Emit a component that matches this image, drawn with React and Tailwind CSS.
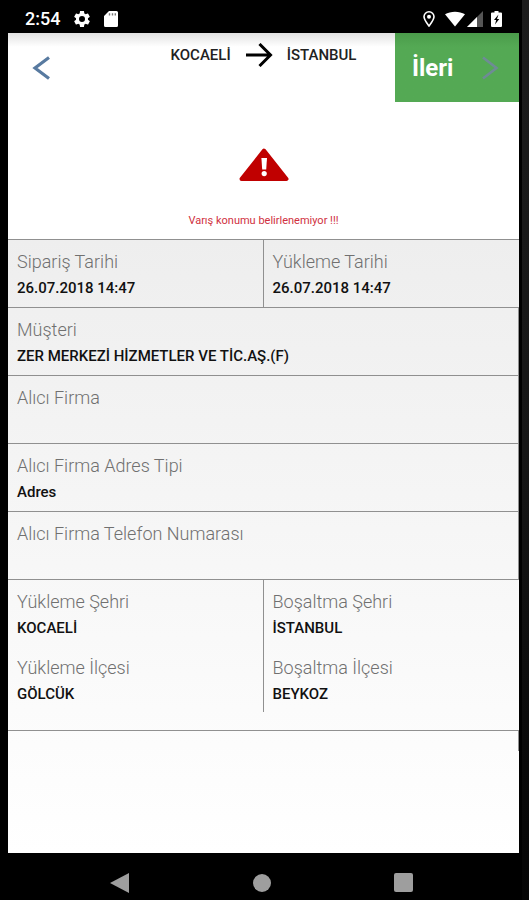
const dates = [
    { label: "Sipariş Tarihi", value: "26.07.2018 14:47" },
    { label: "Yükleme Tarihi", value: "26.07.2018 14:47" },
];

const company = [
    { label: "Müşteri", value: "ZER MERKEZİ HİZMETLER VE TİC.AŞ.(F)" },
    { label: "Alıcı Firma", value: "" },
    { label: "Alıcı Firma Adres Tipi", value: "Adres" },
    { label: "Alıcı Firma Telefon Numarası", value: "" },
];

const loading = [
    { label: "Yükleme Şehri", value: "KOCAELİ" },
    { label: "Yükleme İlçesi", value: "GÖLCÜK" },
];

const unloading = [
    { label: "Boşaltma Şehri", value: "İSTANBUL" },
    { label: "Boşaltma İlçesi", value: "BEYKOZ" },
];

function Field({ label, value }) {
    return (
        <div>
            <dt className="text-lg leading-7 font-light text-[#707070]">{label}</dt>
            <dd className="h-6 text-[15px] leading-6 font-medium text-[#111111]">{value}</dd>
        </div>
    );
}

function StatusBar() {
    return (
        <div className="flex h-[33px] items-center justify-between pt-1 pr-[17px] pl-[17px] text-white">
            <div className="flex items-center gap-3">
                <span className="text-lg leading-6 font-medium">2:54</span>
                <svg className="size-5" viewBox="0 0 24 24" fill="currentColor" aria-hidden="true">
                    <path d="M19.14 12.94c.04-.3.06-.61.06-.94s-.02-.64-.07-.94l2.03-1.58c.18-.14.23-.41.12-.61l-1.92-3.32c-.12-.22-.37-.29-.59-.22l-2.39.96c-.5-.38-1.03-.7-1.62-.94l-.36-2.54c-.04-.24-.24-.41-.48-.41h-3.84c-.24 0-.43.17-.47.41l-.36 2.54c-.59.24-1.13.57-1.62.94l-2.39-.96c-.22-.08-.47 0-.59.22L2.74 8.87c-.12.21-.08.47.12.61l2.03 1.58c-.05.3-.09.63-.09.94s.02.64.07.94l-2.03 1.58c-.18.14-.23.41-.12.61l1.92 3.32c.12.22.37.29.59.22l2.39-.96c.5.38 1.03.7 1.62.94l.36 2.54c.05.24.24.41.48.41h3.84c.24 0 .44-.17.47-.41l.36-2.54c.59-.24 1.13-.56 1.62-.94l2.39.96c.22.08.47 0 .59-.22l1.92-3.32c.12-.22.07-.47-.12-.61l-2.01-1.58zM12 15.6A3.6 3.6 0 1 1 12 8.4a3.6 3.6 0 0 1 0 7.2z" />
                </svg>
                <svg className="h-4 w-[14px]" viewBox="0 0 14 16" fill="currentColor" aria-hidden="true">
                    <path d="M5 0h7.5A1.5 1.5 0 0 1 14 1.500v13a1.5 1.5 0 0 1-1.5 1.5h-11A1.5 1.5 0 0 1 0 14.500V5z" />
                    <path d="M5.500 2.200v2.400M8.500 2.200v2.400M11.300 2.200v2.400" stroke="#777" strokeWidth="1.400" />
                </svg>
            </div>
            <div className="flex items-center">
                <svg className="mr-[10px] h-4 w-3" viewBox="0 0 12 16" fill="none" stroke="currentColor" aria-hidden="true">
                    <path d="M6 15C3.600 11.800 1 8.600 1 5.800a5 5 0 0 1 10 0C11 8.600 8.400 11.800 6 15z" strokeWidth="1.600" />
                    <circle cx="6" cy="5.800" r="2" fill="currentColor" stroke="none" />
                </svg>
                <svg className="mr-[2px] h-4 w-5" viewBox="0 0 20 16" fill="currentColor" aria-hidden="true">
                    <path d="M0 3.200C5.500-.2 14.500-.2 20 3.200L10 15.500z" />
                </svg>
                <svg className="mr-2 size-4" viewBox="0 0 16 16" fill="currentColor" aria-hidden="true">
                    <path d="M16 0v16H0z" fill="#555555" />
                    <path d="M10 6v10H0z" />
                </svg>
                <svg className="h-4 w-[11px]" viewBox="0 0 11 16" fill="currentColor" aria-hidden="true">
                    <path d="M3.500 0h4v1.500H10a1 1 0 0 1 1 1V15a1 1 0 0 1-1 1H1a1 1 0 0 1-1-1V2.500a1 1 0 0 1 1-1h2.500z" />
                    <path d="M7.500 3.500L3 9h2.200L4 13.500 8.300 8H6z" fill="#000" />
                </svg>
            </div>
        </div>
    );
}

function Header() {
    return (
        <header className="flex items-start justify-between bg-linear-to-b from-[#e2e2e2] to-white to-20%">
            <button type="button" aria-label="Geri" className="flex h-[69px] w-[124px] items-center pl-6">
                <svg className="h-6 w-[18px]" viewBox="0 0 18 24" fill="none" stroke="#587aa0" strokeWidth="3.200" aria-hidden="true">
                    <path d="M17 1.500L3 12l14 10.500" />
                </svg>
            </button>
            <div className="flex items-center gap-[14px] pt-2 text-[15px] leading-7 font-medium text-[#222222]">
                <span>KOCAELİ</span>
                <svg className="h-6 w-7" viewBox="0 0 28 24" fill="none" stroke="#000" strokeWidth="3" aria-hidden="true">
                    <path d="M1 12h25M14.500 1L25.500 12l-11 11" />
                </svg>
                <span>İSTANBUL</span>
            </div>
            <button
                type="button"
                className="flex h-[69px] w-[124px] items-center justify-between bg-linear-to-b from-[#4a9b4a] to-[#54a954] to-20% pr-5 pl-[17px] text-2xl font-bold text-white"
            >
                İleri
                <svg className="h-6 w-[18px]" viewBox="0 0 18 24" fill="none" stroke="#6f8b96" strokeWidth="2.600" aria-hidden="true">
                    <path d="M2 1.500L15.500 12 2 22.500" />
                </svg>
            </button>
        </header>
    );
}

function Warning() {
    return (
        <div className="flex flex-col items-center pt-[46px] pb-2">
            <svg className="h-[33px] w-[50px]" viewBox="0 0 50 33" aria-hidden="true">
                <path d="M25 2.500L47.500 31h-45z" fill="#c00000" stroke="#c00000" strokeWidth="4" strokeLinejoin="round" />
                <path d="M22.400 10h5.600l-.8 11.500h-4z" fill="#fff" />
                <circle cx="25.200" cy="25.600" r="2.600" fill="#fff" />
            </svg>
            <p className="mt-[30px] text-[11px] leading-5 text-[#d03040]">Varış konumu belirlenemiyor !!!</p>
        </div>
    );
}

export default function App() {
    return (
        <div className="flex min-h-screen bg-black pl-2 font-['Roboto',sans-serif]">
            <div className="flex flex-1 flex-col">
                <StatusBar />
                <main className="flex flex-1 flex-col bg-white">
                    <Header />
                    <Warning />
                    <dl className="flex-1 bg-linear-to-b from-[#eeeeee] to-white">
                        <div className="grid grid-cols-2 border-t border-[#909090]">
                            {dates.map((item, i) => (
                                <div
                                    key={item.label}
                                    className={i === 0 ? "border-r border-[#909090] px-[9px] pt-2 pb-[7px]" : "px-[9px] pt-2 pb-[7px]"}
                                >
                                    <Field {...item} />
                                </div>
                            ))}
                        </div>
                        {company.map((item) => (
                            <div key={item.label} className="border-t border-r border-[#909090] px-[9px] pt-2 pb-[7px]">
                                <Field {...item} />
                            </div>
                        ))}
                        <div className="grid grid-cols-2 border-y border-[#909090] pb-[18px]">
                            <div className="flex flex-col gap-[14px] border-r border-[#909090] px-[9px] pt-2 pb-[6px]">
                                {loading.map((item) => (
                                    <Field key={item.label} {...item} />
                                ))}
                            </div>
                            <div className="flex flex-col gap-[14px] px-[9px] pt-2 pb-[6px]">
                                {unloading.map((item) => (
                                    <Field key={item.label} {...item} />
                                ))}
                            </div>
                        </div>
                        {/* empty trailing cell */}
                        <div className="h-5 border-r border-[#909090]" />
                    </dl>
                </main>
                <nav className="flex h-[47px] items-center justify-around pt-3 pr-11 pl-10 text-[#9e9e9e]">
                    <button type="button" aria-label="Geri dön">
                        <svg className="size-5" viewBox="0 0 20 20" fill="currentColor" aria-hidden="true">
                            <path d="M19 0v20L0 10z" />
                        </svg>
                    </button>
                    <button type="button" aria-label="Ana ekran" className="size-[18px] rounded-full bg-[#9e9e9e]" />
                    <button type="button" aria-label="Son uygulamalar" className="size-[19px] rounded-xs bg-[#9e9e9e]" />
                </nav>
            </div>
            {/* phone bezel */}
            <div className="ml-[3px] w-[7px] bg-linear-to-b from-[#1c1c1c] via-[#161616] to-[#050505]" />
        </div>
    );
}
